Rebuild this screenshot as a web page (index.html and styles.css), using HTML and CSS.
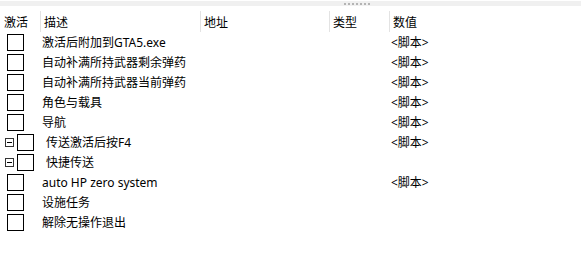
FILE: index.html
```html
<!DOCTYPE html>
<html lang="zh-CN">
<head>
    <meta charset="UTF-8">
    <title>Cheat Table</title>
    <link rel="stylesheet" href="styles.css">
</head>
<body>
    <div class="topbar">
        <div class="tab"></div>
        <div class="splitter"><div class="grip"></div></div>
    </div>
    <div class="table">
        <div class="row header">
            <div class="cell c-act">激活</div>
            <div class="cell c-desc sep">描述</div>
            <div class="cell c-addr sep">地址</div>
            <div class="cell c-type sep">类型</div>
            <div class="cell c-val sep">数值</div>
        </div>
        <div class="row">
            <div class="cell c-act"><span class="box"></span></div>
            <div class="cell c-desc">激活后附加到GTA5.exe</div>
            <div class="cell c-addr"></div>
            <div class="cell c-type"></div>
            <div class="cell c-val">&lt;脚本&gt;</div>
        </div>
        <div class="row">
            <div class="cell c-act"><span class="box"></span></div>
            <div class="cell c-desc">自动补满所持武器剩余弹药</div>
            <div class="cell c-addr"></div>
            <div class="cell c-type"></div>
            <div class="cell c-val">&lt;脚本&gt;</div>
        </div>
        <div class="row">
            <div class="cell c-act"><span class="box"></span></div>
            <div class="cell c-desc">自动补满所持武器当前弹药</div>
            <div class="cell c-addr"></div>
            <div class="cell c-type"></div>
            <div class="cell c-val">&lt;脚本&gt;</div>
        </div>
        <div class="row">
            <div class="cell c-act"><span class="box"></span></div>
            <div class="cell c-desc">角色与载具</div>
            <div class="cell c-addr"></div>
            <div class="cell c-type"></div>
            <div class="cell c-val">&lt;脚本&gt;</div>
        </div>
        <div class="row">
            <div class="cell c-act"><span class="box"></span></div>
            <div class="cell c-desc">导航</div>
            <div class="cell c-addr"></div>
            <div class="cell c-type"></div>
            <div class="cell c-val">&lt;脚本&gt;</div>
        </div>
        <div class="row tree">
            <div class="cell c-act"><span class="toggle"></span><span class="box"></span></div>
            <div class="cell c-desc">传送激活后按F4</div>
            <div class="cell c-addr"></div>
            <div class="cell c-type"></div>
            <div class="cell c-val">&lt;脚本&gt;</div>
        </div>
        <div class="row tree">
            <div class="cell c-act"><span class="toggle"></span><span class="box"></span></div>
            <div class="cell c-desc">快捷传送</div>
            <div class="cell c-addr"></div>
            <div class="cell c-type"></div>
            <div class="cell c-val"></div>
        </div>
        <div class="row">
            <div class="cell c-act"><span class="box"></span></div>
            <div class="cell c-desc">auto HP zero system</div>
            <div class="cell c-addr"></div>
            <div class="cell c-type"></div>
            <div class="cell c-val">&lt;脚本&gt;</div>
        </div>
        <div class="row">
            <div class="cell c-act"><span class="box"></span></div>
            <div class="cell c-desc">设施任务</div>
            <div class="cell c-addr"></div>
            <div class="cell c-type"></div>
            <div class="cell c-val"></div>
        </div>
        <div class="row">
            <div class="cell c-act"><span class="box"></span></div>
            <div class="cell c-desc">解除无操作退出</div>
            <div class="cell c-addr"></div>
            <div class="cell c-type"></div>
            <div class="cell c-val"></div>
        </div>
    </div>
</body>
</html>
```

FILE: styles.css
```css
body {
    margin: 0;
    background: #fff;
    color: #000;
    font-family: "Noto Sans", "Noto Sans CJK SC", sans-serif;
    font-size: 12px;
}
.topbar {
    height: 2px;
    background: #dcdcdc;
    border-bottom: 1px solid #a0a0a0;
    position: relative;
}
.tab {
    position: absolute;
    left: 344px;
    top: 0;
    width: 28px;
    height: 2px;
    background: #c4c4c4;
}
.splitter {
    height: 5px;
    margin-top: 1px;
    background: #f0f0f0;
    position: relative;
}
.grip {
    position: absolute;
    left: 344px;
    top: 2px;
    width: 27px;
    height: 2px;
    background: repeating-linear-gradient(90deg, #b4b4b4 0 2px, transparent 2px 4px);
}
.table {
    margin-top: 7px;
}
.row {
    display: grid;
    grid-template-columns: 40px 160px 129px 60px 1fr;
    height: 20px;
    align-items: center;
}
.header {
    height: 21px;
}
.cell {
    height: 100%;
    display: flex;
    align-items: center;
    padding-left: 2px;
    white-space: nowrap;
    box-sizing: border-box;
}
.header .c-act {
    padding-left: 4px;
}
.header .cell.sep {
    border-left: 1px solid #e3e3e3;
    padding-left: 3px;
}
.c-act {
    padding-left: 7px;
}
.box {
    display: inline-block;
    width: 17px;
    height: 17px;
    border: 1px solid #000;
    box-sizing: border-box;
}
.tree .c-act {
    padding-left: 5px;
}
.tree .c-desc {
    padding-left: 6px;
}
.toggle {
    display: inline-block;
    width: 9px;
    height: 9px;
    border: 1px solid #333;
    box-sizing: border-box;
    margin-right: 3px;
    position: relative;
}
.toggle::after {
    content: "";
    position: absolute;
    left: 1px;
    right: 1px;
    top: 3px;
    height: 1px;
    background: #000;
}
.c-val {
    padding-left: 2px;
}
```
